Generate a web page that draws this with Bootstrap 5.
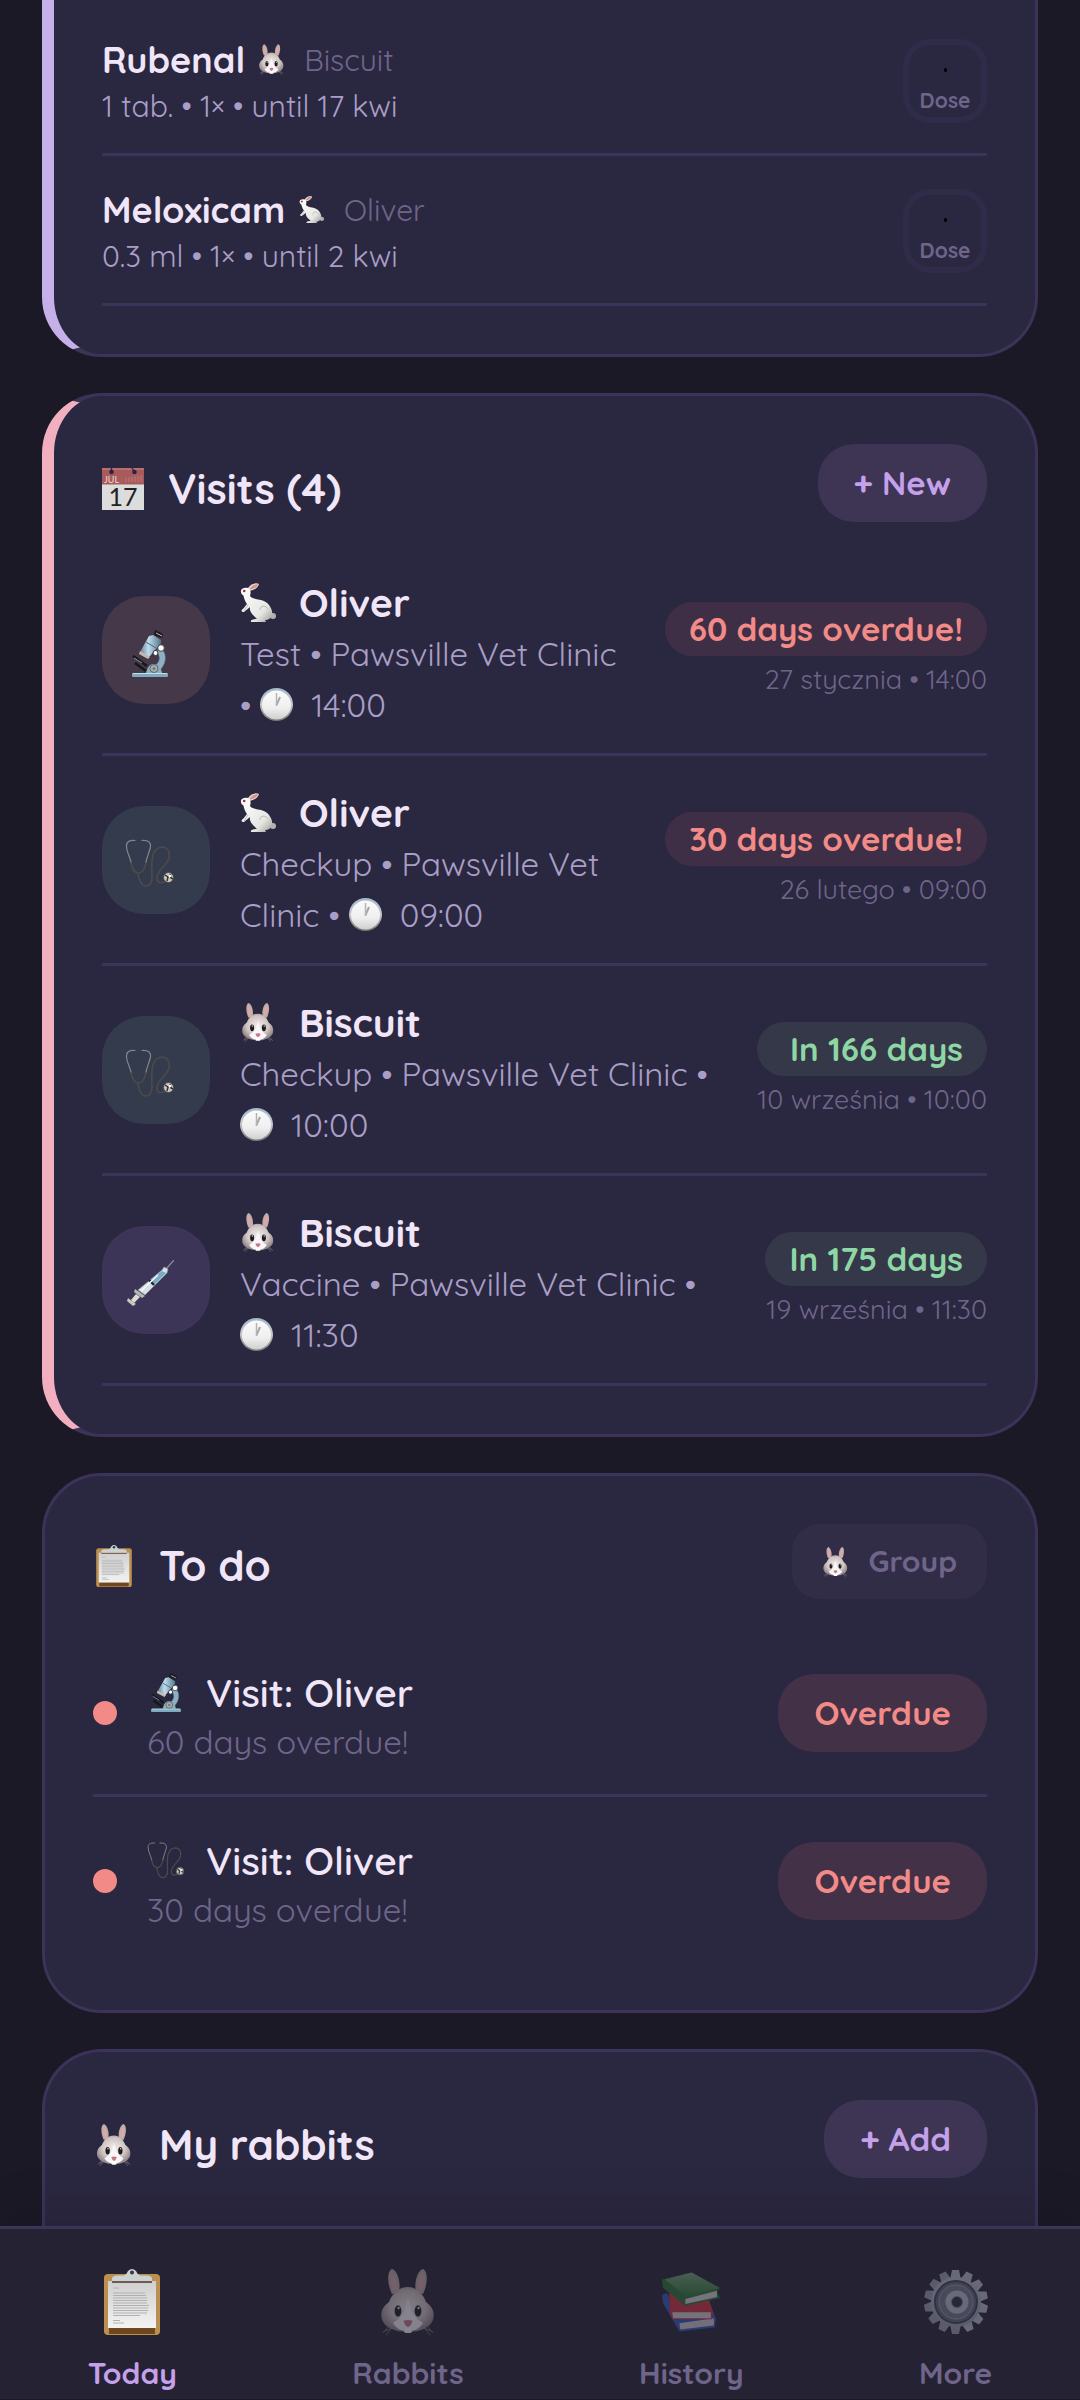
<!DOCTYPE html>
<html lang="en">
<head>
<meta charset="utf-8">
<meta name="viewport" content="width=device-width, initial-scale=1">
<title>Today</title>
<link href="https://cdn.jsdelivr.net/npm/bootstrap@5.3.0/dist/css/bootstrap.min.css" rel="stylesheet">
<style>
:root{--bg:#1c1927;--panel:#2a2740;--line:#3b3358;--ink:#f0e6f8;--soft:#a99ec6;--mute:#6f658a;--accent:#c4a1ea;--red:#f28b87;--green:#8ed6a4}
body{background:var(--bg);color:var(--ink);font-family:Quicksand,Lato,"Noto Sans",sans-serif}
.screen{height:100vh;overflow:hidden}
.feed{padding:0 42px;gap:36px;min-height:0;overflow:hidden}
.panel{background:var(--panel);border:3px solid var(--line);border-radius:60px;padding:48px}
.panel-meds{border-left:12px solid #c5b0ea;border-top:0;border-top-left-radius:0;border-top-right-radius:0;padding-top:6px}
.panel-visits{border-left:12px solid #f2afc0}
.panel-last{border-bottom:0;border-bottom-left-radius:0;border-bottom-right-radius:0}
.head-row{height:102px}
.head-todo{height:105px}
.title{font-size:42px;font-weight:700;line-height:90px;gap:24px}
.head-todo .title{line-height:84px}
.title svg{width:42px;height:42px}
.action{border:0;height:78px;padding:0 36px;border-radius:36px;background:#3d3553;color:var(--accent);font-size:33px;font-weight:700}
.action-red{background:#433147;color:var(--red)}
.action-group{height:75px;padding:0 30px;border-radius:27px;background:#322d46;color:var(--mute);font-size:30px;gap:20px}
.line-row{border-bottom:3px solid var(--line)}
.med{height:150px;padding-top:3px}
.med-text{padding-top:2px}
.med-name{font-size:36px;font-weight:700;line-height:48px;gap:14px}
.med-pet{font-size:30px;font-weight:400;color:var(--mute);margin-left:6px}
.med-info{font-size:30px;line-height:45px;color:var(--soft)}
.dose{width:84px;height:84px;border:6px solid #312b4a;border-radius:27px;background:transparent;color:var(--mute);font-size:21px;font-weight:700;line-height:24px;padding:0}
.dose span{width:3px;height:4px;margin:23px 0 16px;background:#000;border-radius:2px}
.visit{padding:24px 0 23px;gap:30px}
.visit-text{padding-top:7px}
.tile{width:108px;height:108px;border-radius:42px;padding-right:12px;padding-top:6px}
.tile-test{background:#453848}.tile-check{background:#343b4d}.tile-vacc{background:#3d3557}
.pet{font-size:39px;font-weight:700;line-height:51px;gap:23px}
.pet svg{width:36px;height:39px}
.info{font-size:33px;line-height:51px;color:var(--soft)}
.info svg{width:33px;height:33px;vertical-align:-4px;margin-right:9px}
.when{text-align:right;white-space:nowrap;padding-top:4px}
.due{font-size:33px;font-weight:700;line-height:54px;padding:0 24px;border-radius:27px}
.due-red{background:#3f2f46;color:var(--red)}.due-green{background:#343849;color:var(--green)}
.date{font-size:27px;line-height:46px;color:var(--mute)}
.todo{height:168px;gap:30px;padding-top:3px}
.todo-end{height:165px}
.todo-text{padding-top:6px}
.dot{width:24px;height:24px;border-radius:50%;background:var(--red)}
.todo-name{font-size:39px;font-weight:600;line-height:51px;gap:21px}
.todo-sub{font-size:33px;line-height:48px;color:var(--mute)}
.tabs{background:#252233;border-top:3px solid var(--line);border-bottom:1px solid var(--bg);padding:40px 0 6px;box-shadow:0 -12px 48px rgba(0,0,0,.12);z-index:1}
.tabs a{color:var(--mute);font-size:30px;font-weight:700;line-height:39px;text-decoration:none;gap:19px}
.tabs a svg{height:66px;opacity:.45}
.tabs a.on{color:var(--accent)}
.tabs a.on svg{opacity:1}
</style>
<script src="https://cdn.jsdelivr.net/npm/bootstrap@5.3.0/dist/js/bootstrap.bundle.min.js"></script>
</head>
<body>
<svg width="0" height="0" class="position-absolute" aria-hidden="true">
<defs>
<radialGradient id="fur" cx=".5" cy=".45" r=".6"><stop offset="0" stop-color="#f1eceb"/><stop offset=".6" stop-color="#cfc4c2"/><stop offset="1" stop-color="#85777a"/></radialGradient>
<linearGradient id="white" x1="0" y1="0" x2="1" y2="1"><stop offset="0" stop-color="#fff"/><stop offset=".7" stop-color="#e6e6e3"/><stop offset="1" stop-color="#9b9b98"/></linearGradient>
<linearGradient id="paper" x1="0" y1="0" x2="0" y2="1"><stop offset="0" stop-color="#cfcfcf"/><stop offset="1" stop-color="#f3f3f3"/></linearGradient>
<linearGradient id="steel" x1="0" y1="0" x2="1" y2="0"><stop offset="0" stop-color="#5f8299"/><stop offset=".4" stop-color="#c0dcec"/><stop offset="1" stop-color="#54788f"/></linearGradient>
<linearGradient id="rim" x1="0" y1="0" x2="0" y2="1"><stop offset="0" stop-color="#a3b7cc"/><stop offset=".5" stop-color="#c7c9cb"/><stop offset="1" stop-color="#77756f"/></linearGradient>
<linearGradient id="face" x1="0" y1="0" x2="0" y2="1"><stop offset="0" stop-color="#fbfbfb"/><stop offset=".6" stop-color="#efefef"/><stop offset="1" stop-color="#cfcfcf"/></linearGradient>
<linearGradient id="gearfill" x1="0" y1="0" x2="0" y2="1"><stop offset="0" stop-color="#b9c1cf"/><stop offset="1" stop-color="#9a9eac"/></linearGradient>
<linearGradient id="cover" x1="0" y1="0" x2="0" y2="1"><stop offset="0" stop-color="#78a878"/><stop offset="1" stop-color="#2c7a35"/></linearGradient>
</defs>
<symbol id="bunny" viewBox="0 0 54 66">
<path d="M11 25C7 17 5 3 11 0C17 2 20 14 18 23ZM42 25C46 17 48 3 42 0C36 2 33 14 35 23Z" fill="#b9adab"/>
<path d="M12 22C9 14 8 6 11 3C15 7 17 14 16 21ZM41 22C44 14 45 6 42 3C38 7 36 14 37 21Z" fill="#d9a9a8"/>
<path d="M27 18C36 18 42 25 45 33C52 38 54 44 52 51C49 59 39 63 27 63C15 63 4 59 1 51C-1 44 1 38 8 33C11 25 17 18 27 18Z" fill="url(#fur)"/>
<path d="M27 29C29 38 31 48 42 54C38 60 34 62 27 62C20 62 16 60 12 54C23 48 25 38 27 29Z" fill="#f8f6f8"/>
<ellipse cx="17" cy="42" rx="3.4" ry="5.8" fill="#1d1b20"/><ellipse cx="37" cy="42" rx="3.4" ry="5.8" fill="#1d1b20"/>
<circle cx="17.5" cy="39" r="1.2" fill="#ddd"/><circle cx="37.5" cy="39" r="1.2" fill="#ddd"/>
<path d="M22.5 52Q27 50 31.5 52Q30 57 27 58Q24 57 22.5 52Z" fill="#c27786"/>
<rect x="23" y="59" width="8" height="5" rx="2" fill="#fff"/>
<path d="M7 58L2 64M10 60L5 66M13 58L4 62M47 58L52 64M44 60L49 66M41 58L50 62" stroke="#8f878f" stroke-width=".8" fill="none"/>
</symbol>
<symbol id="rabbit" viewBox="0 0 36 39">
<path d="M8 5C11 1 16-1 19 1C18 5 14 7 9 8Z" fill="#dcd9d7"/><path d="M10 5.5C13 2 16 .6 18 1.5C17 4 14 6 10 6.5Z" fill="#df8c83"/>
<circle cx="33" cy="33" r="3" fill="#b3b2ae"/>
<path d="M1 9C0 6 4 4 8 5C11 6 11 10 10 13C14 18 24 15 29 22C35 30 32 37 25 37L26 39H11C10 37 13 36 17 36C13 32 9 29 10 24L4 29C1 29 1 27 3 26L7 21C4 17 4 13 3 12C2 12 1 10 1 9Z" fill="url(#white)"/>
<path d="M8 22L4 28M20 27C20 22 26 22 28 26" fill="none" stroke="#aaa9a6" stroke-width=".8"/>
<circle cx="4.2" cy="8" r="1.3" fill="#b22a2e"/>
</symbol>
<symbol id="microscope" viewBox="0 0 36 47">
<path d="M27 17C36 22 35 34 27 41L21 37C28 33 29 27 25 22Z" fill="#8fb0c2" stroke="#58788a" stroke-width=".6"/>
<path d="M1 26L15 36M3 33L14 41" stroke="#15171a" stroke-width="2.6"/><path d="M2 28L10 33" stroke="#a9b8c0" stroke-width=".8"/>
<path d="M23 0L31 4L30 8L22 5Z" fill="#17181b"/><path d="M24 3L30 6" stroke="#b8c4ca"/>
<path d="M17 6L21 5L29 10L29 13L18 26C16 29 7 25 8 22Z" fill="url(#steel)"/><path d="M14 12L24 18" stroke="#45687d" stroke-width="1"/><path d="M8 21L18 27L16 29L7 24Z" fill="#c9b8ae"/>
<circle cx="29" cy="18" r="3.3" fill="#fff" stroke="#444"/><circle cx="23.5" cy="23" r="2.5" fill="#fff" stroke="#333"/>
<path d="M14 43C16 36 18 34 22 34C27 34 29 38 30 43Z" fill="#91aebb"/><rect y="43" width="36" height="4" rx="1" fill="#7fa9bd"/><path d="M1 43.5H35" stroke="#bfe0ec"/>
<circle cx="22" cy="38.5" r="4" fill="#a4b2b8" stroke="#56676f"/><circle cx="22" cy="38.5" r="1.5" fill="#8a6f66"/>
</symbol>
<symbol id="stetho" viewBox="-1 -1 50 49">
<g fill="none" stroke-linecap="round"><path d="M5 22C6 28 8 33 12 33C17 33 19 29 20 22M12 33C13 41 15 46 20 46C25 46 26 42 26 36C26 30 25 22 27 15C29 9 33 7 37 7C42 8 44 12 43 18C41 26 31 30 31 38C31 43 35 44 39 41" stroke="#4d4b49" stroke-width="1.6"/>
<path d="M9 .5C3 0 0 2 .5 7C1 13 4 17 5 22M16 .5C23 0 25 3 24.5 7C23 13 21 17 20 22" stroke="#85868b" stroke-width="1.2"/></g>
<circle cx="42.5" cy="37.5" r="5" fill="#c9c6c2" stroke="#4a4744" stroke-width="1"/><path d="M39 35L42 37L41 41M44 34L45 38L47 39" stroke="#34302e" stroke-width="1.5" fill="none"/><circle cx="44" cy="36" r="1.3" fill="#fff"/>
</symbol>
<symbol id="syringe" viewBox="0 0 47 46">
<path d="M47 0L39 9" stroke="#868f99" stroke-width="1.2"/>
<path d="M35 10L37 7L41 9L40 13L18 35L11 30Z" fill="#d6e2e4" stroke="#87979c" stroke-width=".6"/><path d="M35 11L39 13L27 25L22 21Z" fill="#78a9c5"/><path d="M22 20L27 25" stroke="#20282e" stroke-width="2.4"/><path d="M31 15L14 31" stroke="#fff" stroke-width="1.3"/>
<path d="M8 29L18 36L15 38L7 32Z" fill="#b7bab4"/><path d="M9 34L4 40L7 43L13 37Z" fill="#dedbd0"/><path d="M1 38L9 44L6 46L0 41Z" fill="#c9c6bb"/>
</symbol>
<symbol id="clock" viewBox="0 0 33 33">
<circle cx="16.5" cy="16.5" r="16.5" fill="url(#rim)"/><circle cx="16.5" cy="17" r="14.5" fill="url(#face)"/><path d="M16.5 17L20 9" stroke="#a6a6a6" stroke-width="2"/><path d="M16.5 18V5" stroke="#b4b4b4" stroke-width="1.5"/>
</symbol>
<symbol id="clipboard" viewBox="0 0 56 66">
<rect y="5" width="56" height="61" rx="4" fill="#bb8f4d"/><path d="M5 58H51V65H5Z" fill="#71481d"/>
<rect x="4" y="12" width="48" height="47" fill="url(#paper)"/>
<path d="M9 19H15M9 24H41M9 26.5H42M9 29H43M9 31.5H43M9 34H43M9 36.5H45M9 39H44M9 41.5H44M9 44H43M9 46.5H36M9 51.5H16M9 54H20" stroke="#b1b1b1" stroke-width="1.1"/>
<path d="M8 12H48V14H8Z" fill="#6d5a55"/><path d="M8 12V9Q9 6.5 13 6.5H20Q23 5 24 2Q28-2 32 2Q33 5 36 6.5H43Q47 6.5 48 9V12Z" fill="#ccd1d2"/><circle cx="28" cy="3.5" r="2" fill="#353545"/>
</symbol>
<symbol id="books" viewBox="0 0 57 58">
<path d="M0 22L5 20L16 46L50 38L53 45L52 54L17 58L1 30Z" fill="#3459bd"/><path d="M17 50L51 45V52L18 56Z" fill="#cfcbd0"/>
<path d="M7 20L10 18L46 26L50 38L49 46L10 46L8 40Z" fill="#cf3540"/><path d="M10 39H48V45H11Z" fill="#d8d3d3"/>
<path d="M0 7L29 0L57 15L54 19L57 25L23 33L1 15Z" fill="#2e7835"/><path d="M3 7L29 0L56 15L24 24Z" fill="url(#cover)"/><path d="M23 26L54 18V24L23 31Z" fill="#d9d5d7"/>
</symbol>
<symbol id="gear" viewBox="-33 -33 66 66">
<g fill="url(#gearfill)"><path d="M-4-32H3L5-22H-6ZM-4 32H3L5 22H-6Z"/><path d="M-4-32H3L5-22H-6ZM-4 32H3L5 22H-6Z" transform="rotate(26)"/><path d="M-4-32H3L5-22H-6ZM-4 32H3L5 22H-6Z" transform="rotate(52)"/><path d="M-4-32H3L5-22H-6ZM-4 32H3L5 22H-6Z" transform="rotate(78)"/><path d="M-4-32H3L5-22H-6ZM-4 32H3L5 22H-6Z" transform="rotate(104)"/><path d="M-4-32H3L5-22H-6ZM-4 32H3L5 22H-6Z" transform="rotate(129)"/><path d="M-4-32H3L5-22H-6ZM-4 32H3L5 22H-6Z" transform="rotate(154)"/></g>
<circle r="25" fill="url(#gearfill)"/><circle r="21" fill="#646c7c" stroke="#3f4555" stroke-width="2"/><circle r="17" fill="#747c8d" stroke="#9aa4b5" stroke-width="1"/><circle cx="1" r="11.5" fill="#bac2cf"/><circle cx="1" r="5.5" fill="#2e2c3b" stroke="#7c8291" stroke-width="1"/>
</symbol>
</svg>

<div class="screen d-flex flex-column">
<main class="feed d-flex flex-column flex-grow-1">

<section class="panel panel-meds flex-shrink-0" aria-label="Medication">
  <div class="med line-row d-flex align-items-center justify-content-between">
    <div class="med-text">
      <div class="med-name d-flex align-items-center">Rubenal <svg width="25" height="31"><use href="#bunny"/></svg><span class="med-pet">Biscuit</span></div>
      <div class="med-info">1 tab. • 1× • until 17 kwi</div>
    </div>
    <button type="button" class="dose d-flex flex-column align-items-center"><span></span>Dose</button>
  </div>
  <div class="med line-row d-flex align-items-center justify-content-between">
    <div class="med-text">
      <div class="med-name d-flex align-items-center">Meloxicam <svg width="25" height="31"><use href="#rabbit"/></svg><span class="med-pet">Oliver</span></div>
      <div class="med-info">0.3 ml • 1× • until 2 kwi</div>
    </div>
    <button type="button" class="dose d-flex flex-column align-items-center"><span></span>Dose</button>
  </div>
</section>

<section class="panel panel-visits flex-shrink-0">
  <div class="head-row d-flex align-items-start justify-content-between">
    <h2 class="title d-flex align-items-center mb-0">
      <svg viewBox="0 0 42 42" aria-hidden="true">
        <rect width="42" height="42" fill="#dcdcdc"/><rect width="42" height="16.5" fill="#a85b5c"/><rect width="42" height="2" fill="#bd6d6b"/>
        <circle cx="9.5" cy="4" r="2.3" fill="#2b2440"/><circle cx="32.5" cy="4" r="2.3" fill="#2b2440"/><path d="M9.5 0V4M30 0L32.5 4" stroke="#2b2440" stroke-width="1.3"/>
        <text x="2" y="14.5" font-family="Lato,sans-serif" font-size="9" font-weight="400" fill="#f0d9d9">JUL</text>
        <path d="M24 10V14M27 9V14M30 9V14M33 8V14M36 8V14M39 7V14" stroke="#bd7b7a" stroke-width="1"/>
        <text x="21" y="38" text-anchor="middle" font-family="Lato,sans-serif" font-size="25" font-weight="400" fill="#222">17</text>
      </svg>Visits (4)</h2>
    <button type="button" class="action">+ New</button>
  </div>
  <div class="visit line-row d-flex align-items-center">
    <div class="tile tile-test d-flex align-items-center justify-content-center flex-shrink-0"><svg width="36" height="47"><use href="#microscope"/></svg></div>
    <div class="visit-text flex-grow-1">
      <div class="pet d-flex align-items-center"><svg><use href="#rabbit"/></svg>Oliver</div>
      <div class="info">Test • Pawsville Vet Clinic<br>• <svg><use href="#clock"/></svg> 14:00</div>
    </div>
    <div class="when"><div class="due due-red">60 days overdue!</div><div class="date">27 stycznia • 14:00</div></div>
  </div>
  <div class="visit line-row d-flex align-items-center">
    <div class="tile tile-check d-flex align-items-center justify-content-center flex-shrink-0"><svg width="50" height="49"><use href="#stetho"/></svg></div>
    <div class="visit-text flex-grow-1">
      <div class="pet d-flex align-items-center"><svg><use href="#rabbit"/></svg>Oliver</div>
      <div class="info">Checkup • Pawsville Vet<br>Clinic • <svg><use href="#clock"/></svg> 09:00</div>
    </div>
    <div class="when"><div class="due due-red">30 days overdue!</div><div class="date">26 lutego • 09:00</div></div>
  </div>
  <div class="visit line-row d-flex align-items-center">
    <div class="tile tile-check d-flex align-items-center justify-content-center flex-shrink-0"><svg width="50" height="49"><use href="#stetho"/></svg></div>
    <div class="visit-text flex-grow-1">
      <div class="pet d-flex align-items-center"><svg><use href="#bunny"/></svg>Biscuit</div>
      <div class="info">Checkup • Pawsville Vet Clinic •<br><svg><use href="#clock"/></svg> 10:00</div>
    </div>
    <div class="when"><div class="due due-green">In 166 days</div><div class="date">10 września • 10:00</div></div>
  </div>
  <div class="visit line-row d-flex align-items-center">
    <div class="tile tile-vacc d-flex align-items-center justify-content-center flex-shrink-0"><svg width="47" height="46"><use href="#syringe"/></svg></div>
    <div class="visit-text flex-grow-1">
      <div class="pet d-flex align-items-center"><svg><use href="#bunny"/></svg>Biscuit</div>
      <div class="info">Vaccine • Pawsville Vet Clinic •<br><svg><use href="#clock"/></svg> 11:30</div>
    </div>
    <div class="when"><div class="due due-green">In 175 days</div><div class="date">19 września • 11:30</div></div>
  </div>
</section>

<section class="panel flex-shrink-0">
  <div class="head-row head-todo d-flex align-items-start justify-content-between">
    <h2 class="title d-flex align-items-center mb-0"><svg><use href="#clipboard"/></svg>To do</h2>
    <button type="button" class="action action-group d-flex align-items-center"><svg width="27" height="30"><use href="#bunny"/></svg>Group</button>
  </div>
  <div class="todo line-row d-flex align-items-center">
    <div class="dot"></div>
    <div class="todo-text flex-grow-1">
      <div class="todo-name d-flex align-items-center"><svg width="38" height="39"><use href="#microscope"/></svg>Visit: Oliver</div>
      <div class="todo-sub">60 days overdue!</div>
    </div>
    <button type="button" class="action action-red">Overdue</button>
  </div>
  <div class="todo todo-end d-flex align-items-center">
    <div class="dot"></div>
    <div class="todo-text flex-grow-1">
      <div class="todo-name d-flex align-items-center"><svg width="38" height="39"><use href="#stetho"/></svg>Visit: Oliver</div>
      <div class="todo-sub">30 days overdue!</div>
    </div>
    <button type="button" class="action action-red">Overdue</button>
  </div>
</section>

<section class="panel panel-last flex-grow-1">
  <div class="head-row d-flex align-items-start justify-content-between">
    <h2 class="title d-flex align-items-center mb-0"><svg><use href="#bunny"/></svg>My rabbits</h2>
    <button type="button" class="action">+ Add</button>
  </div>
</section>
</main>

<nav class="tabs d-flex justify-content-around flex-shrink-0 position-relative" aria-label="Main">
  <a href="#today" class="on d-flex flex-column align-items-center"><svg width="56"><use href="#clipboard"/></svg>Today</a>
  <a href="#rabbits" class="d-flex flex-column align-items-center"><svg width="54"><use href="#bunny"/></svg>Rabbits</a>
  <a href="#history" class="d-flex flex-column align-items-center"><svg width="58"><use href="#books"/></svg>History</a>
  <a href="#more" class="d-flex flex-column align-items-center"><svg width="66"><use href="#gear"/></svg>More</a>
</nav>
</div>
</body>
</html>
